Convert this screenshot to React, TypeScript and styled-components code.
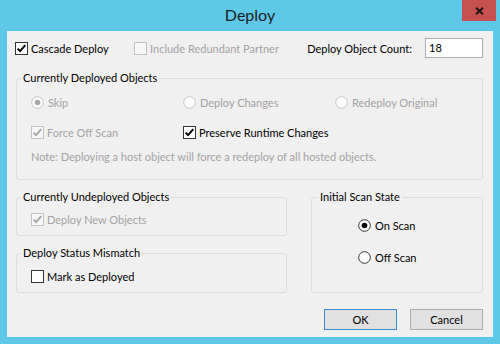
import React from "react";
import styled, { createGlobalStyle } from "styled-components";

const GlobalStyle = createGlobalStyle`
  html, body {
    margin: 0;
    padding: 0;
    background: #5ec8e8;
  }
  body {
    font-family: Lato, "Noto Sans", sans-serif;
    font-size: 11px;
    color: #000;
  }
`;

const Window = styled.div`
  width: 500px;
  height: 344px;
  box-sizing: border-box;
  background: #5ec8e8;
  padding: 0 7px 7px 7px;
  display: flex;
  flex-direction: column;
`;

const TitleBar = styled.div`
  height: 31px;
  display: grid;
  grid-template-columns: 1fr auto 1fr;
  margin: 0 -7px;
`;

const Title = styled.div`
  grid-column: 2;
  font-size: 16px;
  line-height: 30px;
  color: #1c1c1c;
`;

const CloseButton = styled.div`
  grid-column: 3;
  justify-self: end;
  width: 34px;
  height: 21px;
  margin-right: 4px;
  background: #c75050;
  display: flex;
  align-items: center;
  justify-content: center;
`;

const Client = styled.div`
  flex: 1;
  background: #f0f0f0;
  padding: 7px 10px 0 9px;
  display: flex;
  flex-direction: column;
`;

const TopRow = styled.div`
  height: 20px;
  margin-left: -1px;
  display: flex;
  align-items: center;
`;

const CountLabel = styled.span`
  margin-left: auto;
  margin-right: 13px;
  white-space: nowrap;
`;

const CountInput = styled.div`
  width: 58px;
  height: 20px;
  box-sizing: border-box;
  background: #fff;
  border: 1px solid #abadb3;
  padding-left: 3px;
  line-height: 18px;
`;

const Group = styled.fieldset<{ $pad: string }>`
  margin: 0;
  min-width: 0;
  border: 1px solid #dcdcdc;
  border-radius: 3px;
  padding: ${(p) => p.$pad};
  display: flex;
  flex-direction: column;
`;

const Legend = styled.legend`
  padding: 0 2px;
  margin-left: -10px;
  line-height: 16px;
`;

const OptionGrid = styled.div`
  display: grid;
  grid-template-columns: 152px 152px 1fr;
  row-gap: 14px;
`;

const Note = styled.div`
  margin-top: 9px;
  line-height: 16px;
  color: #a3a3a3;
`;

const Bottom = styled.div`
  margin-top: 9px;
  display: grid;
  grid-template-columns: 271px 1fr;
  column-gap: 24px;
`;

const LeftColumn = styled.div`
  display: flex;
  flex-direction: column;
  gap: 9px;
`;

const RadioStack = styled.div`
  display: flex;
  flex-direction: column;
  gap: 16px;
`;

const ButtonRow = styled.div`
  margin-top: 16px;
  display: flex;
  justify-content: flex-end;
  gap: 13px;
`;

const Button = styled.div<{ $default?: boolean }>`
  width: 73px;
  height: 21px;
  box-sizing: border-box;
  background: #e1e1e1;
  border: 1px solid ${(p) => (p.$default ? "#3c8ad8" : "#adadad")};
  display: flex;
  align-items: center;
  justify-content: center;
`;

const Option = styled.label<{ $disabled?: boolean; $gap?: number }>`
  display: inline-flex;
  align-items: center;
  gap: ${(p) => p.$gap ?? 3}px;
  height: 16px;
  white-space: nowrap;
  color: ${(p) => (p.$disabled ? "#a3a3a3" : "#000")};
`;

const BoxSvg = styled.svg`
  flex: none;
  display: block;
`;

function CheckBox({ checked, disabled }: { checked?: boolean; disabled?: boolean }) {
  const edge = disabled ? "#c2c2c2" : "#333";
  const mark = disabled ? "#a8a8a8" : "#000";
  return (
    <BoxSvg width="13" height="13" viewBox="0 0 13 13">
      <rect x="0.5" y="0.5" width="12" height="12" fill={disabled ? "#f7f7f7" : "#fff"} stroke={edge} />
      {checked && (
        <path d="M2.6 6.6 L5.1 9.1 L10.3 3.2" fill="none" stroke={mark} strokeWidth="2" />
      )}
    </BoxSvg>
  );
}

function Radio({ checked, disabled }: { checked?: boolean; disabled?: boolean }) {
  const edge = disabled ? "#c2c2c2" : "#333";
  const dot = disabled ? "#a8a8a8" : "#000";
  return (
    <BoxSvg width="13" height="13" viewBox="0 0 13 13">
      <circle cx="6.5" cy="6.5" r="5.8" fill="#fff" stroke={edge} />
      {checked && <circle cx="6.5" cy="6.5" r="2.8" fill={dot} />}
    </BoxSvg>
  );
}

export default function App() {
  return (
    <>
      <GlobalStyle />
      <Window>
        <TitleBar>
          <Title>Deploy</Title>
          <CloseButton>
            <svg width="9" height="8" viewBox="0 0 9 8">
              <path d="M1 0.8 L8 7.2 M8 0.8 L1 7.2" stroke="#1e1414" strokeWidth="2" />
            </svg>
          </CloseButton>
        </TitleBar>
        <Client>
          <TopRow>
            <Option style={{ width: 119 }}>
              <CheckBox checked />
              Cascade Deploy
            </Option>
            <Option $disabled>
              <CheckBox disabled />
              Include Redundant Partner
            </Option>
            <CountLabel>Deploy Object Count:</CountLabel>
            <CountInput>18</CountInput>
          </TopRow>

          <Group $pad="8px 14px 14px 14px" style={{ marginTop: 12 }}>
            <Legend>Currently Deployed Objects</Legend>
            <OptionGrid>
              <Option $disabled $gap={4}>
                <Radio checked disabled />
                Skip
              </Option>
              <Option $disabled $gap={4}>
                <Radio disabled />
                Deploy Changes
              </Option>
              <Option $disabled $gap={4}>
                <Radio disabled />
                Redeploy Original
              </Option>
              <Option $disabled>
                <CheckBox checked disabled />
                Force Off Scan
              </Option>
              <Option>
                <CheckBox checked />
                Preserve Runtime Changes
              </Option>
            </OptionGrid>
            <Note>Note: Deploying a host object will force a redeploy of all hosted objects.</Note>
          </Group>

          <Bottom>
            <LeftColumn>
              <Group $pad="6px 14px 8px 14px">
                <Legend>Currently Undeployed Objects</Legend>
                <Option $disabled>
                  <CheckBox checked disabled />
                  Deploy New Objects
                </Option>
              </Group>
              <Group $pad="7px 14px 8px 14px">
                <Legend>Deploy Status Mismatch</Legend>
                <Option>
                  <CheckBox />
                  Mark as Deployed
                </Option>
              </Group>
            </LeftColumn>
            <Group $pad="12px 14px 8px 46px">
              <Legend style={{ marginLeft: -40 }}>Initial Scan State</Legend>
              <RadioStack>
                <Option $gap={4}>
                  <Radio checked />
                  On Scan
                </Option>
                <Option $gap={4}>
                  <Radio />
                  Off Scan
                </Option>
              </RadioStack>
            </Group>
          </Bottom>

          <ButtonRow>
            <Button $default>OK</Button>
            <Button>Cancel</Button>
          </ButtonRow>
        </Client>
      </Window>
    </>
  );
}
